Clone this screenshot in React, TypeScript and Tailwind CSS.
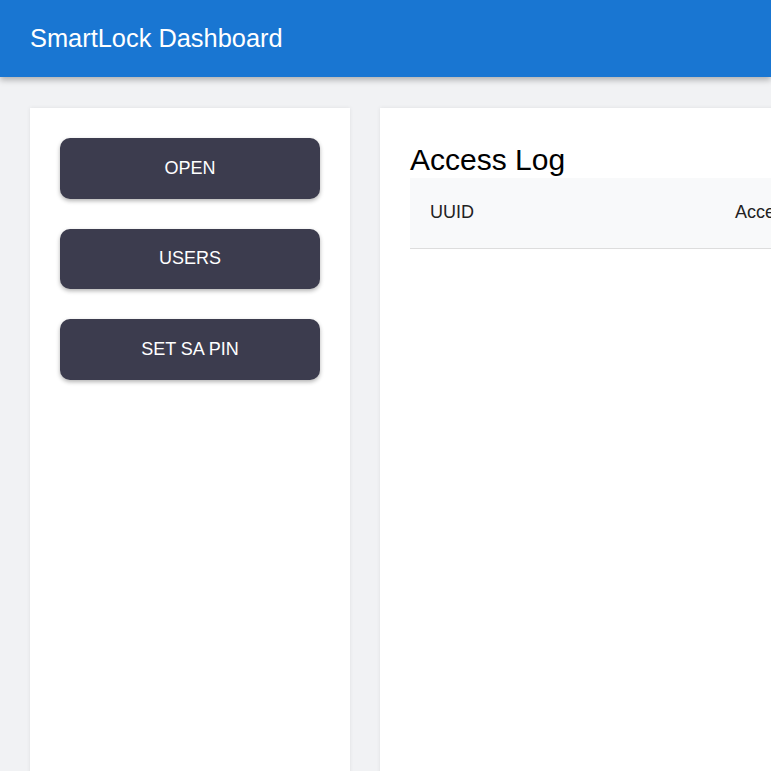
import React from "react";

export default function App() {
  const buttons = ["OPEN", "USERS", "SET SA PIN"];
  return (
    <div
      className="w-screen h-screen overflow-hidden bg-[#f1f2f4] flex flex-col"
      style={{ fontFamily: '"Liberation Sans", Arial, sans-serif' }}
    >
      <header className="h-[77px] shrink-0 bg-[#1976d2] flex items-center px-[30px] shadow-[0_3px_6px_rgba(0,0,0,0.28)] relative z-10">
        <h1 className="text-white text-[25.4px] leading-none">SmartLock Dashboard</h1>
      </header>
      <div className="flex gap-[30px] px-[30px] pt-[31px] flex-1 min-w-[1200px]">
        <aside className="w-[320px] shrink-0 bg-white p-[30px] flex flex-col gap-[30px] shadow-[0_0_4px_rgba(0,0,0,0.08)] h-[700px]">
          {buttons.map((b) => (
            <button
              key={b}
              className="h-[60.5px] w-full rounded-[10px] bg-[#3c3c4e] text-white text-[18px] shadow-[0_2px_4px_rgba(0,0,0,0.3)]"
            >
              {b}
            </button>
          ))}
        </aside>
        <main className="flex-1 bg-white p-[30px] shadow-[0_0_4px_rgba(0,0,0,0.08)] h-[700px]">
          <h2 className="text-[30px] leading-[36px] mt-[4px] text-black">Access Log</h2>
          <table className="w-full border-collapse">
            <thead>
              <tr className="bg-[#f8f9fa] border-b border-[#dddddd]">
                <th className="text-left font-normal text-[18px] text-[#222] px-5 h-[70px] w-[325px]">UUID</th>
                <th className="text-left font-normal text-[18px] text-[#222] px-0 h-[70px]">Access Time</th>
                <th className="text-left font-normal text-[18px] text-[#222] px-5 h-[70px]">Status</th>
              </tr>
            </thead>
          </table>
        </main>
      </div>
    </div>
  );
}
